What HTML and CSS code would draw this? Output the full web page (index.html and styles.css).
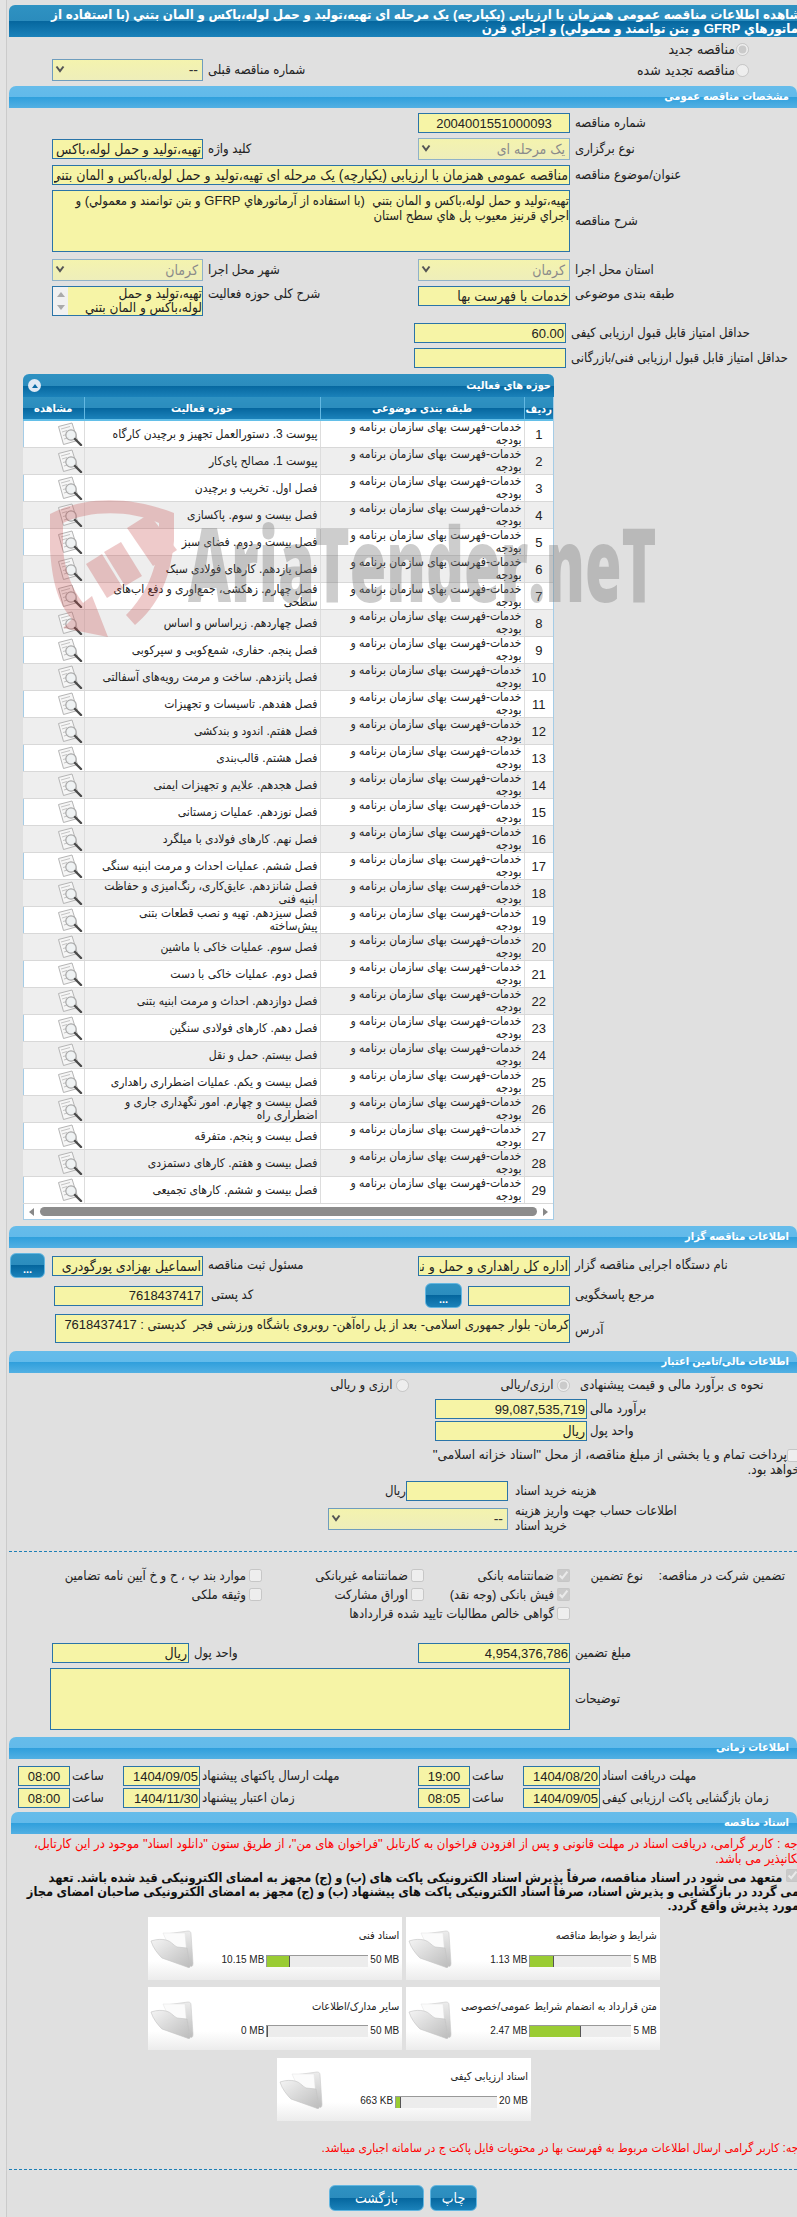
FILE: index.html
```html
<!DOCTYPE html>
<html lang="fa" dir="rtl">
<head>
<meta charset="utf-8">
<title>مشاهده اطلاعات مناقصه</title>
<link rel="stylesheet" href="styles.css">
</head>
<body>
<svg class="defs" width="0" height="0" aria-hidden="true">
  <defs>
    <linearGradient id="fback" x1="0" y1="0" x2="0" y2="1"><stop offset="0" stop-color="#ececec"/><stop offset="1" stop-color="#bdbdbd"/></linearGradient>
    <linearGradient id="ffront" x1="0" y1="0" x2="1" y2="1"><stop offset="0" stop-color="#f4f4f4"/><stop offset="1" stop-color="#bcbcbc"/></linearGradient>
    <symbol id="lens" viewBox="0 0 26 24">
      <path d="M1.500 4.500 15 1l5.500 17.500L6.500 22.500z" fill="#f6f6f6" stroke="#b5b5b5"/>
      <path d="M4 7l9-2.500M5 10l5-1.500M6 13.500l4-1M7 17l5-1.500" stroke="#c4c4c4" fill="none"/>
      <circle cx="14" cy="13" r="5.200" fill="#eef1f3" fill-opacity=".8" stroke="#a9a9a9" stroke-width="1.200"/>
      <path d="M18 17l6 6" stroke="#4a4a4a" stroke-width="2.400" stroke-linecap="round"/>
    </symbol>
    <symbol id="folder" viewBox="0 0 44 38">
      <path d="M16 4 38 1c2 0 3 1 3 3l2 29c0 3-1 4-3 3L20 26z" fill="url(#fback)" stroke="#c9c9c9" stroke-width=".6"/>
      <path d="M13 3 35 3l2 25-14-2z" fill="#fbfbfb" stroke="#e2e2e2" stroke-width=".5"/>
      <path d="M1 11c6-2 11-2 15-1 5 1 7 5 11 7l10 1 3 18c0 2-1 2-3 1L12 28C8 24 3 18 1 11z" fill="url(#ffront)" stroke="#c2c2c2" stroke-width=".6"/>
    </symbol>
    <symbol id="chev" viewBox="0 0 10 8">
      <path d="M1.500 1.500 5 6l3.500-4.500" fill="none" stroke="#555" stroke-width="2"/>
    </symbol>
  </defs>
</svg>

<header class="title-bar">
  <h1 class="title-text">مشاهده اطلاعات مناقصه عمومی همزمان با ارزیابی (یکپارچه) یک مرحله ای تهیه،تولید و حمل لوله،باکس و المان بتني (با استفاده از<br>آرماتورهاي GFRP و بتن توانمند و معمولي) و اجراي قرن</h1>
</header>

<div class="radio-line mt6">
  <input class="rd" type="radio" name="kind" checked disabled><span class="radio-text">مناقصه جدید</span>
</div>
<div class="row h22 mt3">
  <div class="lab-radio"><input class="rd" type="radio" name="kind" disabled><span class="radio-text">مناقصه تجدید شده</span></div>
  <div class="lab">شماره مناقصه قبلی</div>
  <div class="sel dark"><span>--</span><svg class="chev"><use href="#chev"/></svg></div>
</div>

<h2 class="sec mt5">مشخصات مناقصه عمومی</h2>

<div class="row mt5">
  <div class="lab">شماره مناقصه</div>
  <input class="fld num center" readonly value="2004001551000093">
</div>
<div class="row mt5">
  <div class="lab">نوع برگزاری</div>
  <div class="sel"><span>یک مرحله ای</span><svg class="chev"><use href="#chev"/></svg></div>
  <div class="lab">کلید واژه</div>
  <input class="fld" readonly value="تهیه،تولید و حمل لوله،باکس و المان بتني">
</div>
<div class="row-wide mt5">
  <div class="lab">عنوان/موضوع مناقصه</div>
  <input class="fld" readonly value="مناقصه عمومی همزمان با ارزیابی (یکپارچه) یک مرحله ای تهیه،تولید و حمل لوله،باکس و المان بتني (با استفاده از">
</div>
<div class="row-wide mt5">
  <div class="lab">شرح مناقصه</div>
  <textarea class="fld area h62" readonly>تهیه،تولید و حمل لوله،باکس و المان بتني  (با استفاده از آرماتورهاي GFRP و بتن توانمند و معمولي) و
اجراي قرنیز معیوب پل هاي سطح استان</textarea>
</div>
<div class="row mt7">
  <div class="lab">استان محل اجرا</div>
  <div class="sel"><span>کرمان</span><svg class="chev"><use href="#chev"/></svg></div>
  <div class="lab">شهر محل اجرا</div>
  <div class="sel"><span>کرمان</span><svg class="chev"><use href="#chev"/></svg></div>
</div>
<div class="row top mt5">
  <div class="lab lab-top">طبقه بندی موضوعی</div>
  <input class="fld" readonly value="خدمات با فهرست بها">
  <div class="lab lab-top">شرح کلی حوزه فعالیت</div>
  <div class="listbox">
    <div class="list-text">تهیه،تولید و حمل<br>لوله،باکس و المان بتني</div>
    <div class="list-bar"><i class="tri-up"></i><i class="tri-down"></i></div>
  </div>
</div>
<div class="row-score mt7">
  <div class="lab">حداقل امتیاز قابل قبول ارزیابی کیفی</div>
  <input class="fld num" readonly value="60.00">
</div>
<div class="row-score mt5">
  <div class="lab">حداقل امتیاز قابل قبول ارزیابی فنی/بازرگانی</div>
  <input class="fld num" readonly value="">
</div>

<section class="panel">
  <div class="panel-head">
    <span class="panel-title">حوزه های فعالیت</span>
    <span class="collapse"><i class="tri-white"></i></span>
  </div>
  <table class="grid">
    <thead>
      <tr><th class="c1 low">ردیف</th><th class="c2">طبقه بندی موضوعی</th><th class="c3">حوزه فعالیت</th><th class="c4">مشاهده</th></tr>
    </thead>
    <tbody>
      <tr><td class="n">1</td><td>خدمات-فهرست بهای سازمان برنامه و<br>بودجه</td><td>پیوست 3. دستورالعمل تجهیز و برچیدن کارگاه</td><td class="ic"><svg class="lens"><use href="#lens"/></svg></td></tr>
      <tr><td class="n">2</td><td>خدمات-فهرست بهای سازمان برنامه و<br>بودجه</td><td>پیوست 1. مصالح پای‌کار</td><td class="ic"><svg class="lens"><use href="#lens"/></svg></td></tr>
      <tr><td class="n">3</td><td>خدمات-فهرست بهای سازمان برنامه و<br>بودجه</td><td>فصل اول. تخریب و برچیدن</td><td class="ic"><svg class="lens"><use href="#lens"/></svg></td></tr>
      <tr><td class="n">4</td><td>خدمات-فهرست بهای سازمان برنامه و<br>بودجه</td><td>فصل بیست و سوم. پاکسازی</td><td class="ic"><svg class="lens"><use href="#lens"/></svg></td></tr>
      <tr><td class="n">5</td><td>خدمات-فهرست بهای سازمان برنامه و<br>بودجه</td><td>فصل بیست و دوم. فضای سبز</td><td class="ic"><svg class="lens"><use href="#lens"/></svg></td></tr>
      <tr><td class="n">6</td><td>خدمات-فهرست بهای سازمان برنامه و<br>بودجه</td><td>فصل یازدهم. کارهای فولادی سبک</td><td class="ic"><svg class="lens"><use href="#lens"/></svg></td></tr>
      <tr><td class="n">7</td><td>خدمات-فهرست بهای سازمان برنامه و<br>بودجه</td><td>فصل چهارم. زهکشی، جمع‌آوری و دفع آب‌های<br>سطحی</td><td class="ic"><svg class="lens"><use href="#lens"/></svg></td></tr>
      <tr><td class="n">8</td><td>خدمات-فهرست بهای سازمان برنامه و<br>بودجه</td><td>فصل چهاردهم. زیراساس و اساس</td><td class="ic"><svg class="lens"><use href="#lens"/></svg></td></tr>
      <tr><td class="n">9</td><td>خدمات-فهرست بهای سازمان برنامه و<br>بودجه</td><td>فصل پنجم. حفاری، شمع‌کوبی و سپرکوبی</td><td class="ic"><svg class="lens"><use href="#lens"/></svg></td></tr>
      <tr><td class="n">10</td><td>خدمات-فهرست بهای سازمان برنامه و<br>بودجه</td><td>فصل پانزدهم. ساخت و مرمت رویه‌های آسفالتی</td><td class="ic"><svg class="lens"><use href="#lens"/></svg></td></tr>
      <tr><td class="n">11</td><td>خدمات-فهرست بهای سازمان برنامه و<br>بودجه</td><td>فصل هفدهم. تاسیسات و تجهیزات</td><td class="ic"><svg class="lens"><use href="#lens"/></svg></td></tr>
      <tr><td class="n">12</td><td>خدمات-فهرست بهای سازمان برنامه و<br>بودجه</td><td>فصل هفتم. اندود و بندکشی</td><td class="ic"><svg class="lens"><use href="#lens"/></svg></td></tr>
      <tr><td class="n">13</td><td>خدمات-فهرست بهای سازمان برنامه و<br>بودجه</td><td>فصل هشتم. قالب‌بندی</td><td class="ic"><svg class="lens"><use href="#lens"/></svg></td></tr>
      <tr><td class="n">14</td><td>خدمات-فهرست بهای سازمان برنامه و<br>بودجه</td><td>فصل هجدهم. علایم و تجهیزات ایمنی</td><td class="ic"><svg class="lens"><use href="#lens"/></svg></td></tr>
      <tr><td class="n">15</td><td>خدمات-فهرست بهای سازمان برنامه و<br>بودجه</td><td>فصل نوزدهم. عملیات زمستانی</td><td class="ic"><svg class="lens"><use href="#lens"/></svg></td></tr>
      <tr><td class="n">16</td><td>خدمات-فهرست بهای سازمان برنامه و<br>بودجه</td><td>فصل نهم. کارهای فولادی با میلگرد</td><td class="ic"><svg class="lens"><use href="#lens"/></svg></td></tr>
      <tr><td class="n">17</td><td>خدمات-فهرست بهای سازمان برنامه و<br>بودجه</td><td>فصل ششم.  عملیات احداث و مرمت ابنیه سنگی</td><td class="ic"><svg class="lens"><use href="#lens"/></svg></td></tr>
      <tr><td class="n">18</td><td>خدمات-فهرست بهای سازمان برنامه و<br>بودجه</td><td>فصل شانزدهم. عایق‌کاری، رنگ‌آمیزی و حفاظت<br>ابنیه فنی</td><td class="ic"><svg class="lens"><use href="#lens"/></svg></td></tr>
      <tr><td class="n">19</td><td>خدمات-فهرست بهای سازمان برنامه و<br>بودجه</td><td>فصل سیزدهم. تهیه و نصب قطعات بتنی<br>پیش‌ساخته</td><td class="ic"><svg class="lens"><use href="#lens"/></svg></td></tr>
      <tr><td class="n">20</td><td>خدمات-فهرست بهای سازمان برنامه و<br>بودجه</td><td>فصل سوم. عملیات خاکی با ماشین</td><td class="ic"><svg class="lens"><use href="#lens"/></svg></td></tr>
      <tr><td class="n">21</td><td>خدمات-فهرست بهای سازمان برنامه و<br>بودجه</td><td>فصل دوم. عملیات خاکی با دست</td><td class="ic"><svg class="lens"><use href="#lens"/></svg></td></tr>
      <tr><td class="n">22</td><td>خدمات-فهرست بهای سازمان برنامه و<br>بودجه</td><td>فصل دوازدهم. احداث و مرمت ابنیه بتنی</td><td class="ic"><svg class="lens"><use href="#lens"/></svg></td></tr>
      <tr><td class="n">23</td><td>خدمات-فهرست بهای سازمان برنامه و<br>بودجه</td><td>فصل دهم. کارهای فولادی سنگین</td><td class="ic"><svg class="lens"><use href="#lens"/></svg></td></tr>
      <tr><td class="n">24</td><td>خدمات-فهرست بهای سازمان برنامه و<br>بودجه</td><td>فصل بیستم. حمل و نقل</td><td class="ic"><svg class="lens"><use href="#lens"/></svg></td></tr>
      <tr><td class="n">25</td><td>خدمات-فهرست بهای سازمان برنامه و<br>بودجه</td><td>فصل بیست و یکم. عملیات اضطراری راهداری</td><td class="ic"><svg class="lens"><use href="#lens"/></svg></td></tr>
      <tr><td class="n">26</td><td>خدمات-فهرست بهای سازمان برنامه و<br>بودجه</td><td>فصل بیست و چهارم. امور نگهداری جاری و<br>اضطراری راه</td><td class="ic"><svg class="lens"><use href="#lens"/></svg></td></tr>
      <tr><td class="n">27</td><td>خدمات-فهرست بهای سازمان برنامه و<br>بودجه</td><td>فصل بیست و پنجم. متفرقه</td><td class="ic"><svg class="lens"><use href="#lens"/></svg></td></tr>
      <tr><td class="n">28</td><td>خدمات-فهرست بهای سازمان برنامه و<br>بودجه</td><td>فصل بیست و هفتم. کارهای دستمزدی</td><td class="ic"><svg class="lens"><use href="#lens"/></svg></td></tr>
      <tr><td class="n">29</td><td>خدمات-فهرست بهای سازمان برنامه و<br>بودجه</td><td>فصل بیست و ششم. کارهای تجمیعی</td><td class="ic"><svg class="lens"><use href="#lens"/></svg></td></tr>
    </tbody>
  </table>
  <div class="hscroll"><i class="arrow-r"></i><span class="thumb"></span><i class="arrow-l"></i></div>
</section>

<h2 class="sec mt6">اطلاعات مناقصه گزار</h2>
<div class="row-btn mt5">
  <div class="lab">نام دستگاه اجرایی مناقصه گزار</div>
  <input class="fld" readonly value="اداره کل راهداری و حمل و نقل جاده ای استان کرمان">
  <div class="lab">مسئول ثبت مناقصه</div>
  <input class="fld" readonly value="اسماعیل بهزادی پورگودری">
  <button class="btn-dots" type="button">...</button>
</div>
<div class="row-btn mt5">
  <div class="lab">مرجع پاسخگویی</div>
  <div class="ref-cell"><input class="fld" readonly value=""><button class="btn-dots btn-ref" type="button">...</button></div>
  <div class="lab lab-wide">کد پستی</div>
  <input class="fld num postal" readonly value="7618437417">
</div>
<div class="row-wide mt6">
  <div class="lab lab-low">آدرس</div>
  <textarea class="fld area h29 narrow" readonly>کرمان- بلوار جمهوری اسلامی- بعد از پل راه‌آهن- روبروی باشگاه ورزشی فجر  کدپستی : 7618437417</textarea>
</div>

<h2 class="sec mt8">اطلاعات مالی/تامین اعتبار</h2>
<div class="row-est mt5">
  <div class="lab">نحوه ی برآورد مالی و قیمت پیشنهادی</div>
  <div class="radios-est">
    <label class="opt opt-est"><input class="rd" type="radio" name="cur" checked disabled><span>ارزی/ریالی</span></label>
    <label class="opt"><input class="rd" type="radio" name="cur" disabled><span>ارزی و ریالی</span></label>
  </div>
</div>
<div class="row-amount mt7">
  <div class="lab lab-3">برآورد مالی</div>
  <input class="fld num" readonly value="99,087,535,719">
</div>
<div class="row-amount mt2">
  <div class="lab lab-3">واحد پول</div>
  <input class="fld" readonly value="ریال">
</div>
<p class="treasury"><input class="cb" type="checkbox" disabled>پرداخت تمام و یا بخشی از مبلغ مناقصه، از محل "اسناد خزانه اسلامی"<br>خواهد بود.</p>
<div class="row-doc mt4">
  <div class="lab lab-7">هزینه خرید اسناد</div>
  <input class="fld doc-price" readonly value="">
  <span class="unit">ریال</span>
</div>
<div class="row-doc mt3">
  <div class="lab lab-7">اطلاعات حساب جهت واریز هزینه<br>خرید اسناد</div>
  <div class="sel dark acct"><span>--</span><svg class="chev"><use href="#chev"/></svg></div>
</div>

<hr class="dash dash-a">

<div class="guar">
  <div class="g-a">تضمین شرکت در مناقصه:</div>
  <div class="g-b">نوع تضمین</div>
  <label class="opt"><input class="cb" type="checkbox" checked disabled><span>ضمانتنامه بانکی</span></label>
  <label class="opt"><input class="cb" type="checkbox" disabled><span>ضمانتنامه غیربانکی</span></label>
  <label class="opt"><input class="cb" type="checkbox" disabled><span>موارد بند پ ، ح و خ آیین نامه تضامین</span></label>
  <div></div><div></div>
  <label class="opt"><input class="cb" type="checkbox" checked disabled><span>فیش بانکی (وجه نقد)</span></label>
  <label class="opt"><input class="cb" type="checkbox" disabled><span>اوراق مشارکت</span></label>
  <label class="opt"><input class="cb" type="checkbox" disabled><span>وثیقه ملکی</span></label>
  <div></div><div></div>
  <label class="opt g-span"><input class="cb" type="checkbox" disabled><span>گواهی خالص مطالبات تایید شده قراردادها</span></label>
</div>

<div class="row-money mt20">
  <div class="lab">مبلغ تضمین</div>
  <input class="fld num" readonly value="4,954,376,786">
  <div class="lab">واحد پول</div>
  <input class="fld" readonly value="ریال">
</div>
<div class="row-notes mt5">
  <div class="lab">توضیحات</div>
  <textarea class="fld area h62" readonly></textarea>
</div>

<h2 class="sec mt7">اطلاعات زمانی</h2>
<div class="row-dates mt7">
  <div class="lab lab-2">مهلت دریافت اسناد</div>
  <input class="fld num" readonly value="1404/08/20">
  <div class="lab lab-2">ساعت</div>
  <input class="fld num center" readonly value="19:00">
  <div class="lab lab-2">مهلت ارسال پاکتهای پیشنهاد</div>
  <input class="fld num" readonly value="1404/09/05">
  <div class="lab lab-2">ساعت</div>
  <input class="fld num center" readonly value="08:00">
</div>
<div class="row-dates mt2">
  <div class="lab lab-2">زمان بازگشایی پاکت ارزیابی کیفی</div>
  <input class="fld num" readonly value="1404/09/05">
  <div class="lab lab-2">ساعت</div>
  <input class="fld num center" readonly value="08:05">
  <div class="lab lab-2">زمان اعتبار پیشنهاد</div>
  <input class="fld num" readonly value="1404/11/30">
  <div class="lab lab-2">ساعت</div>
  <input class="fld num center" readonly value="08:00">
</div>

<h2 class="sec sec-docs">اسناد مناقصه</h2>
<p class="note note-a">توجه : کاربر گرامی، دریافت اسناد در مهلت قانونی و پس از افزودن فراخوان به کارتابل "فراخوان های من"، از طریق ستون "دانلود اسناد" موجود در این کارتابل،<br>امکانپذیر می باشد.</p>
<p class="pledge"><input class="cb" type="checkbox" checked disabled> متعهد می شود در اسناد مناقصه، صرفاً پذیرش اسناد الکترونیکی پاکت های (ب) و (ج) مجهز به امضای الکترونیکی قید شده باشد. تعهد<br>می گردد در بازگشایی و پذیرش اسناد، صرفاً اسناد الکترونیکی پاکت های پیشنهاد (ب) و (ج) مجهز به امضای الکترونیکی صاحبان امضای مجاز<br>مورد پذیرش واقع گردد.</p>

<div class="cards">
  <article class="card">
    <div class="card-body"><div class="card-title">شرایط و ضوابط مناقصه</div>
      <div class="meter"><span class="ltr">5 MB</span><span class="bar"><span class="fill" style="width:24px"></span></span><span class="ltr">1.13 MB</span></div></div>
    <svg class="folder"><use href="#folder"/></svg>
  </article>
  <article class="card">
    <div class="card-body"><div class="card-title">اسناد فنی</div>
      <div class="meter"><span class="ltr">50 MB</span><span class="bar"><span class="fill" style="width:23px"></span></span><span class="ltr">10.15 MB</span></div></div>
    <svg class="folder"><use href="#folder"/></svg>
  </article>
  <article class="card">
    <div class="card-body"><div class="card-title">متن قرارداد به انضمام شرایط عمومی/خصوصی</div>
      <div class="meter"><span class="ltr">5 MB</span><span class="bar"><span class="fill" style="width:51px"></span></span><span class="ltr">2.47 MB</span></div></div>
    <svg class="folder"><use href="#folder"/></svg>
  </article>
  <article class="card">
    <div class="card-body"><div class="card-title">سایر مدارک/اطلاعات</div>
      <div class="meter"><span class="ltr">50 MB</span><span class="bar"><span class="fill" style="width:0"></span></span><span class="ltr">0 MB</span></div></div>
    <svg class="folder"><use href="#folder"/></svg>
  </article>
  <article class="card">
    <div class="card-body"><div class="card-title">اسناد ارزیابی کیفی</div>
      <div class="meter"><span class="ltr">20 MB</span><span class="bar"><span class="fill" style="width:5px"></span></span><span class="ltr">663 KB</span></div></div>
    <svg class="folder"><use href="#folder"/></svg>
  </article>
</div>

<p class="note note-b">توجه: کاربر گرامی ارسال اطلاعات مربوط به فهرست بها در محتویات فایل پاکت ج در سامانه اجباری میباشد.</p>
<hr class="dash dash-b">
<div class="actions">
  <button class="act act-print" type="button">چاپ</button>
  <button class="act act-back" type="button">بازگشت</button>
</div>

<svg class="watermark" viewBox="0 0 620 160" width="620" height="160" aria-hidden="true">
  <g fill="#c44545" opacity=".28">
    <path d="M10 24C45 6 90 6 134 23v28c-4 42-18 66-39 84l-9-10c16-16 29-38 33-72V33C90 20 50 20 23 33v26c2 22 9 40 20 54l9-7 16 41-45-9 9-9C17 113 12 88 10 60z"/>
    <path d="M46 74l16-10 21 34-16 10z"/>
    <path d="M64 62l17-10 21 34-17 10z"/>
    <path d="M87 38l22-14 28 36-24 16z"/>
  </g>
  <text class="wm-text" transform="translate(148 112) scale(.58 1)" x="0" y="0" direction="ltr" fill="#777" opacity=".36">AriaTender.neT</text>
</svg>
</body>
</html>
```
FILE: styles.css
```css
*{box-sizing:border-box}
html{background:#e3e3e3;overflow:hidden}
body{margin:0 0 0 6px;border-left:1px solid #cbcbcb;padding:5px 0 0 2px;height:2217px;background:#e0e0e0;color:#222;font:13px/14.500px "Liberation Sans","DejaVu Sans Condensed","DejaVu Sans",sans-serif;overflow:hidden}
.defs{position:absolute}
.mt2{margin-top:2px}.mt3{margin-top:3px}.mt4{margin-top:4px}.mt5{margin-top:5px}.mt6{margin-top:6px}.mt7{margin-top:7px}.mt8{margin-top:8px}.mt20{margin-top:20px}
.h22{height:22px}

.title-bar{height:32px;border-radius:6px 0 0 0;background:linear-gradient(#2f92c2 0,#2b8cbd 50%,#05669e 50%,#1b82ba 100%)}
.title-text{margin:0 -12px 0 0;padding-top:3px;color:#fff;font-size:13.200px;line-height:14px;font-weight:700;white-space:nowrap}

.sec{margin:0;height:22px;padding-right:8px;border-radius:7px 7px 0 0;color:#fff;font-size:11px;line-height:21px;font-weight:700;background:linear-gradient(#66bcea 0,#62baea 50%,#2f9fdc 50%,#52b0e3 100%)}
.sec.mt5{margin-top:5px}.sec.mt6{margin-top:6px}.sec.mt7{margin-top:7px}.sec.mt8{margin-top:8px}
.sec-docs{margin:4px 0 0 2px}

.row,.row-wide,.row-score,.row-btn,.row-est,.row-amount,.row-doc,.row-money,.row-notes,.row-dates{display:grid;align-items:center}
.row{grid-template-columns:227px 152px 215px 151px}
.row.top{align-items:start}
.row-wide{grid-template-columns:227px 518px}
.row-score{grid-template-columns:231px 152px}
.row-btn{grid-template-columns:227px 152px 215px 151px 7px 35px}
.row-est{grid-template-columns:222px 1fr;height:14px}
.row-amount{grid-template-columns:210px 152px}
.row-doc{grid-template-columns:289px auto 1fr}
.row-money{grid-template-columns:227px 152px 229px 137px}
.row-notes{grid-template-columns:227px 520px}
.row-dates{grid-template-columns:197px 77px 53px 52px 218px 77px 53px 52px}

.lab{text-align:left;padding-left:5px;white-space:nowrap}
.lab-radio{display:flex;align-items:center;gap:1px;padding-right:48px;white-space:nowrap;grid-column:1/3}
.lab-top{margin-top:1px}
.lab-low{margin-top:4px}
.lab-2{padding-left:2px}
.lab-3{padding-left:3px}
.lab-7{padding-left:7px}
.lab-wide{padding-left:8px}

.fld{display:block;width:100%;height:20px;margin:0;padding:0 1px;border:1px solid #2a74a8;border-radius:0;background:#f6f4a6;color:#222;font:14px/16px "Liberation Sans","DejaVu Sans Condensed","DejaVu Sans",sans-serif;outline:0;direction:rtl;text-align:right}
.num{font-size:13px}
.center{text-align:center}
.area{display:block;resize:none;overflow:hidden;font-size:13px;line-height:14.500px;padding:3px 0 0}
.h62{height:62px}.h29{height:29px}
.narrow{width:515px}
.postal{width:149px}
.ref-cell{display:flex;gap:6px;align-items:center}
.ref-cell .fld{width:102px}

.sel{display:flex;justify-content:space-between;align-items:center;height:22px;padding:0 4px 0 2px;border:1px solid #8fb2c8;background:linear-gradient(#f4f3ae,#eeeeba);color:#8a8a8a;font-size:14px}
.sel.dark{color:#333;border-color:#6f9dbd}
.chev{width:10px;height:8px;margin-bottom:2px}
.acct{width:180px}

.rd,.cb{margin:0;flex:none;width:13px;height:13px}
.radio-line{display:flex;align-items:center;gap:1px;height:13px;padding-right:48px}
.radio-text{white-space:nowrap;font-size:14px}

.listbox{display:flex;height:30px;border:1px solid #2a74a8;background:#f6f4a6;overflow:hidden}
.list-text{flex:1;font-size:13.500px;line-height:13.500px;white-space:nowrap}
.list-bar{width:15px;flex:none;background:#f1f1f1;display:flex;flex-direction:column;justify-content:space-between;align-items:center;padding:5px 0}
.tri-up{border:4px solid transparent;border-top:0;border-bottom:5px solid #aaa}
.tri-down{border:4px solid transparent;border-bottom:0;border-top:5px solid #aaa}

.panel{width:531px;margin:6px 243px 0 0;background:#fff;border:1px solid #a5cce6;border-top:0;border-radius:6px 6px 0 0}
.panel-head{display:flex;justify-content:space-between;align-items:center;height:23px;margin:0 -1px;padding:0 3px 0 5px;color:#fff;font-size:11px;font-weight:700;border-radius:6px 6px 0 0;background:linear-gradient(#2f92c2 0,#2b8cbd 50%,#05669e 50%,#1b82ba 100%)}
.collapse{display:flex;align-items:center;justify-content:center;width:13px;height:13px;border-radius:50%;background:#dfe9f4}
.tri-white{border:3.500px solid transparent;border-top:0;border-bottom:4px solid #0a6aa5}

.grid{width:100%;table-layout:fixed;border-collapse:collapse;font-size:12px}
.c1{width:29px}.c2{width:204px}.c3{width:236px}.c4{width:61px}
.grid th{height:23px;padding:0;color:#fff;font-size:11px;font-weight:700;text-align:center;border-left:1px solid #63b8e2;border-bottom:2px solid #63bfe8;background:linear-gradient(#2f92c2 0,#2b8cbd 50%,#05669e 50%,#1b82ba 100%)}
.grid th:last-child{border-left:0}
.grid td{height:27px;padding:0 2px 0 0;line-height:13px;border-left:1px solid #ddd;border-bottom:1px solid #d8d8d8;text-align:right;overflow:hidden;white-space:nowrap}
.grid td:last-child{border-left:0}
.grid tbody tr:nth-child(even){background:#eee}
.grid td.n{padding:0;text-align:center;font-size:13px}
.grid td.ic{padding:0}
.lens{display:block;width:26px;height:24px;transform:translateX(-1px)}
.grid th.low{padding-top:3px}
.hscroll{display:flex;align-items:center;justify-content:space-between;height:15px;padding:0 5px;direction:ltr}
.thumb{flex:1;height:9px;margin:0 6px;border-radius:5px;background:#8c8c8c}
.arrow-r{border:4px solid transparent;border-left:0;border-right:5px solid #888;order:-1}
.arrow-l{border:4px solid transparent;border-right:0;border-left:5px solid #888}

.btn-dots{grid-column:6;height:25px;padding:6px 0 0;border:1px solid #63b6e0;border-radius:6px;color:#fff;font:700 11px/12px "Liberation Sans",sans-serif;background:linear-gradient(#2f92c2 0,#2b8cbd 50%,#05669e 50%,#1b82ba 100%)}
.btn-ref{width:37px;flex:none}

.radios-est{display:flex;padding-right:5.500px}
.opt{display:flex;align-items:center;gap:3px;white-space:nowrap}
.opt-est{width:161px}

.treasury{margin:7px -3px 0 0;font-size:13.500px;line-height:14.700px;white-space:nowrap}
.treasury .cb{vertical-align:middle;margin:0}
.doc-price{width:102px;height:20px}

.dash{margin:0;border:0;border-top:1px dashed #1d7fb6;height:0}
.dash-a{margin-top:18px}
.dash-b{margin-top:14px}

.guar{display:grid;grid-template-columns:135px 80px 146px 162px 1fr;grid-auto-rows:19px;align-items:center;margin-top:14px;padding-right:12px}
.g-a,.g-b{white-space:nowrap}
.g-b{padding-right:7px}
.g-span{grid-column:3/6}

.note{margin:0;color:#f00;white-space:nowrap}
.note-a{margin:3px -10px 0 0;font-size:13px;line-height:14.700px}
.note-b{margin:20px -10px 0 0;font-size:12px}
.pledge{margin:2px -2px 0 0;color:#111;font-weight:700;font-size:12.750px;line-height:14.300px;white-space:nowrap}

.cards{display:flex;flex-wrap:wrap;justify-content:center;gap:7.500px 3.500px;width:512px;margin:3px auto 0;transform:translateX(1px)}
.card{display:flex;align-items:center;width:254px;height:63px;padding:0 3px 0 2px;background:linear-gradient(#fff 0,#fff 70%,#ececec 100%)}
.card-body{flex:1;min-width:0}
.card-title{font-size:11px;line-height:14px;white-space:nowrap;height:25px}
.meter{display:flex;align-items:center;gap:2px;white-space:nowrap;font-size:10px}
.ltr{direction:ltr;unicode-bidi:isolate}
.bar{display:block;width:102px;height:12px;flex:none;direction:ltr;background:#ececec;border-top:1px solid #999;border-left:1px solid #999}
.fill{display:block;height:100%;background:#9acc33;border-right:1px solid #555}
.folder{flex:none;width:44px;height:38px;margin-top:2px}

.actions{display:flex;justify-content:center;gap:6px;margin-top:15px}
.act{height:26px;padding:0;border:1px solid #63b6e0;border-radius:6px;color:#fff;font:14px/16px "Liberation Sans","DejaVu Sans Condensed","DejaVu Sans",sans-serif;background:linear-gradient(#2f92c2 0,#2b8cbd 50%,#05669e 50%,#1b82ba 100%)}
.act-print{width:47px}
.act-back{width:95px}

.watermark{position:absolute;left:40px;top:490px;pointer-events:none}
.wm-text{font:800 102px "Open Sans",sans-serif}
```
